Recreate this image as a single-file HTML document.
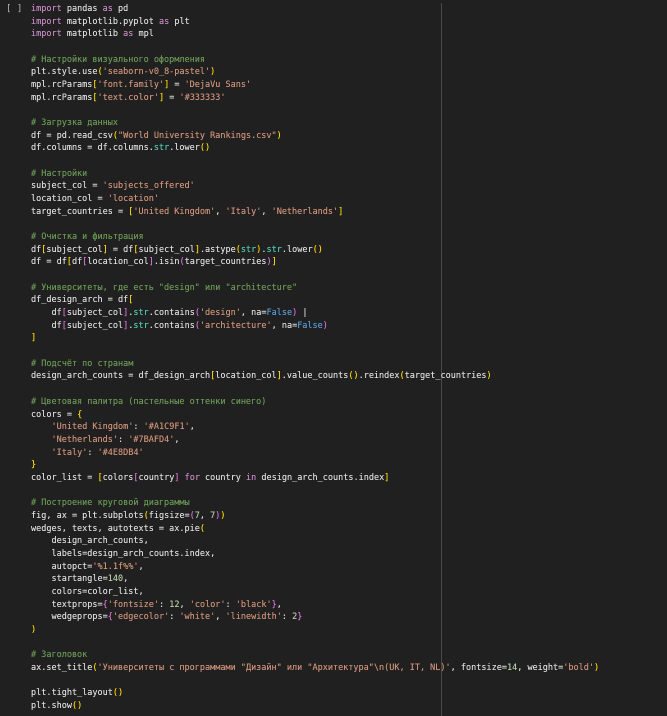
<!DOCTYPE html>
<html><head><meta charset="utf-8"><style>
html,body{margin:0;padding:0;background:#202020;width:667px;height:716px;overflow:hidden}
pre{position:absolute;left:31px;top:3px;margin:0;font-family:"DejaVu Sans Mono","Liberation Mono",monospace;font-size:8.5px;line-height:12.67px;color:#dcdcdc;white-space:pre;text-shadow:0 0 0.3px currentColor}
.gut{position:absolute;left:6px;top:3px;font-family:"DejaVu Sans Mono",monospace;font-size:9px;line-height:12.67px;color:#b8b8b8}
.rule{position:absolute;left:441px;top:3px;width:1px;height:713px;background:#4a4a4a}
.k{color:#c586c0}.c{color:#6a9955}.s{color:#ce9178}.n{color:#b5cea8}.t{color:#4ec9b0}.b{color:#569cd6}
.g{color:#ffd700}.p{color:#da70d6}.u{color:#179fff}
</style></head><body>
<div class="gut">[ ]</div>
<div class="rule"></div>
<pre><span class="k">import</span> pandas <span class="k">as</span> pd
<span class="k">import</span> matplotlib.pyplot <span class="k">as</span> plt
<span class="k">import</span> matplotlib <span class="k">as</span> mpl

<span class="c"># Настройки визуального оформления</span>
plt.style.use<span class="g">(</span><span class="s">'seaborn-v0_8-pastel'</span><span class="g">)</span>
mpl.rcParams<span class="g">[</span><span class="s">'font.family'</span><span class="g">]</span> = <span class="s">'DejaVu Sans'</span>
mpl.rcParams<span class="g">[</span><span class="s">'text.color'</span><span class="g">]</span> = <span class="s">'#333333'</span>

<span class="c"># Загрузка данных</span>
df = pd.read_csv<span class="g">(</span><span class="s">"World University Rankings.csv"</span><span class="g">)</span>
df.columns = df.columns.<span class="t">str</span>.lower<span class="g">()</span>

<span class="c"># Настройки</span>
subject_col = <span class="s">'subjects_offered'</span>
location_col = <span class="s">'location'</span>
target_countries = <span class="g">[</span><span class="s">'United Kingdom'</span>, <span class="s">'Italy'</span>, <span class="s">'Netherlands'</span><span class="g">]</span>

<span class="c"># Очистка и фильтрация</span>
df<span class="g">[</span>subject_col<span class="g">]</span> = df<span class="g">[</span>subject_col<span class="g">]</span>.astype<span class="g">(</span><span class="t">str</span><span class="g">)</span>.<span class="t">str</span>.lower<span class="g">()</span>
df = df<span class="g">[</span>df<span class="p">[</span>location_col<span class="p">]</span>.isin<span class="p">(</span>target_countries<span class="p">)</span><span class="g">]</span>

<span class="c"># Университеты, где есть "design" или "architecture"</span>
df_design_arch = df<span class="g">[</span>
    df<span class="p">[</span>subject_col<span class="p">]</span>.<span class="t">str</span>.contains<span class="p">(</span><span class="s">'design'</span>, na=<span class="b">False</span><span class="p">)</span> |
    df<span class="p">[</span>subject_col<span class="p">]</span>.<span class="t">str</span>.contains<span class="p">(</span><span class="s">'architecture'</span>, na=<span class="b">False</span><span class="p">)</span>
<span class="g">]</span>

<span class="c"># Подсчёт по странам</span>
design_arch_counts = df_design_arch<span class="g">[</span>location_col<span class="g">]</span>.value_counts<span class="g">()</span>.reindex<span class="g">(</span>target_countries<span class="g">)</span>

<span class="c"># Цветовая палитра (пастельные оттенки синего)</span>
colors = <span class="g">{</span>
    <span class="s">'United Kingdom'</span>: <span class="s">'#A1C9F1'</span>,
    <span class="s">'Netherlands'</span>: <span class="s">'#7BAFD4'</span>,
    <span class="s">'Italy'</span>: <span class="s">'#4E8DB4'</span>
<span class="g">}</span>
color_list = <span class="g">[</span>colors<span class="p">[</span>country<span class="p">]</span> <span class="k">for</span> country <span class="k">in</span> design_arch_counts.index<span class="g">]</span>

<span class="c"># Построение круговой диаграммы</span>
fig, ax = plt.subplots<span class="g">(</span>figsize=<span class="p">(</span><span class="n">7</span>, <span class="n">7</span><span class="p">)</span><span class="g">)</span>
wedges, texts, autotexts = ax.pie<span class="g">(</span>
    design_arch_counts,
    labels=design_arch_counts.index,
    autopct=<span class="s">'%1.1f%%'</span>,
    startangle=<span class="n">140</span>,
    colors=color_list,
    textprops=<span class="p">{</span><span class="s">'fontsize'</span>: <span class="n">12</span>, <span class="s">'color'</span>: <span class="s">'black'</span><span class="p">}</span>,
    wedgeprops=<span class="p">{</span><span class="s">'edgecolor'</span>: <span class="s">'white'</span>, <span class="s">'linewidth'</span>: <span class="n">2</span><span class="p">}</span>
<span class="g">)</span>

<span class="c"># Заголовок</span>
ax.set_title<span class="g">(</span><span class="s">'Университеты с программами "Дизайн" или "Архитектура"\n(UK, IT, NL)'</span>, fontsize=<span class="n">14</span>, weight=<span class="s">'bold'</span><span class="g">)</span>

plt.tight_layout<span class="g">()</span>
plt.show<span class="g">()</span></pre>
</body></html>
